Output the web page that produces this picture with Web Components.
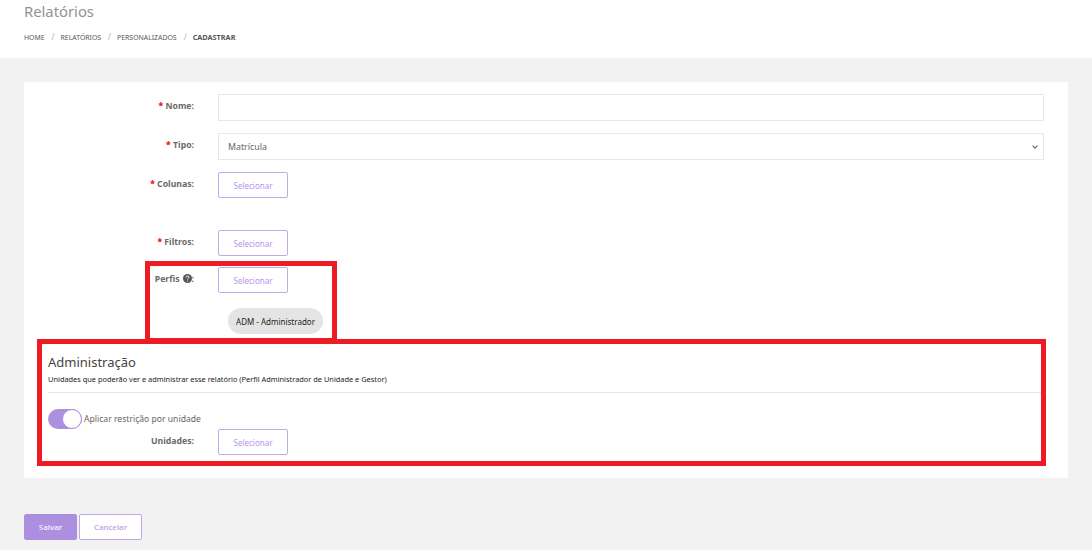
<!DOCTYPE html>
<html lang="pt-BR">
<head>
<meta charset="utf-8">
<title>Relatórios</title>
<style>
  html, body { margin: 0; height: 550px; overflow: hidden; }
  body { background: #f2f2f2; font-family: "Noto Sans", "Open Sans", "Liberation Sans", sans-serif; color: #555; position: relative; }
</style>
</head>
<body>
<page-header titulo="Relatórios">
  <bread-item>HOME</bread-item>
  <bread-item>RELATÓRIOS</bread-item>
  <bread-item>PERSONALIZADOS</bread-item>
  <bread-item atual>CADASTRAR</bread-item>
</page-header>

<form-card>
  <form-row label="Nome:" obrigatorio h="27"><text-field></text-field></form-row>
  <form-row label="Tipo:" obrigatorio h="27" style="margin-top:12px"><select-field valor="Matrícula"></select-field></form-row>
  <form-row label="Colunas:" obrigatorio style="margin-top:12px"><pick-button></pick-button></form-row>
  <form-row label="Filtros:" obrigatorio style="margin-top:32px"><pick-button></pick-button></form-row>
  <form-row label="Perfis" ajuda style="margin-top:11px"><pick-button></pick-button></form-row>
  <form-row style="margin-top:15px"><tag-chip>ADM - Administrador</tag-chip></form-row>
  <admin-section titulo="Administração" sub="Unidades que poderão ver e administrar esse relatório (Perfil Administrador de Unidade e Gestor)">
    <toggle-switch>Aplicar restrição por unidade</toggle-switch>
    <form-row label="Unidades:"><pick-button></pick-button></form-row>
  </admin-section>
</form-card>

<form-actions></form-actions>

<red-mark x="145" y="261" w="192" h="82"></red-mark>
<red-mark x="37" y="339" w="1009" h="127"></red-mark>

<script>
class PageHeader extends HTMLElement {
  connectedCallback() {
    this.attachShadow({ mode: "open" }).innerHTML = `
    <style>
      :host { display: block; height: 58px; background: #fff; padding-left: 24px; box-sizing: border-box; }
      h1 { margin: 0; padding-top: 1px; font-size: 14.8px; line-height: 20px; font-weight: 400; color: #929292; }
      nav { display: flex; margin-top: 11px; }
    </style>
    <h1>${this.getAttribute("titulo")}</h1>
    <nav><slot></slot></nav>`;
  }
}
class BreadItem extends HTMLElement {
  connectedCallback() {
    const atual = this.hasAttribute("atual");
    this.attachShadow({ mode: "open" }).innerHTML = `
    <style>
      :host { display: block; font-size: ${atual ? 7.3 : 6.9}px; line-height: 10px; color: #555; font-weight: ${atual ? 700 : 400}; }
      i { font-style: normal; color: #b5b5b5; font-weight: 400; font-size: 8px; margin: 0 6px 0 7px; }
    </style>
    <slot></slot>${atual ? "" : "<i>/</i>"}`;
  }
}
class FormCard extends HTMLElement {
  connectedCallback() {
    this.attachShadow({ mode: "open" }).innerHTML = `
    <style>
      :host { display: block; width: 1044px; height: 396px; box-sizing: border-box; margin: 24px 0 0 24px; padding: 12px 24px 0 0; background: #fff; }
    </style>
    <slot></slot>`;
  }
}
class FormRow extends HTMLElement {
  connectedCallback() {
    const label = this.getAttribute("label") || "";
    const req = this.hasAttribute("obrigatorio") ? `<b>*</b> ` : "";
    const ajuda = this.hasAttribute("ajuda")
      ? `<svg width="9" height="9" viewBox="0 0 9 9"><circle cx="4.5" cy="4.5" r="4.5" fill="#555"/><path d="M3 3.5c0-2 3-2 3-.3 0 1.100-1.500 1-1.500 2.200" fill="none" stroke="#fff" stroke-width="1"/><circle cx="4.500" cy="7" r=".6" fill="#fff"/></svg>:` : "";
    this.attachShadow({ mode: "open" }).innerHTML = `
    <style>
      :host { display: grid; grid-template-columns: 170px 1fr; column-gap: 24px; }
      .lab { text-align: right; font-size: 8.7px; line-height: 13px; font-weight: 700; color: #6a6a6a; padding-top: 6px; white-space: nowrap; }
      .lab b { color: #e81c1c; }
      svg { vertical-align: -1px; margin-left: 3px; }
    </style>
    <div class="lab">${req}${label}${ajuda}</div>
    <div><slot></slot></div>`;
  }
}
class TextField extends HTMLElement {
  connectedCallback() {
    this.attachShadow({ mode: "open" }).innerHTML = `
    <style>
      :host { display: block; height: 27px; box-sizing: border-box; border: 1px solid #e8e8e8; background: #fff; }
    </style>`;
  }
}
class SelectField extends HTMLElement {
  connectedCallback() {
    this.attachShadow({ mode: "open" }).innerHTML = `
    <style>
      :host { display: flex; align-items: center; justify-content: space-between; height: 27px; box-sizing: border-box; border: 1px solid #e8e8e8; padding: 0 5px 0 9px; font-size: 8.8px; color: #666; }
      svg { display: block; }
    </style>
    <span>${this.getAttribute("valor")}</span>
    <svg width="6" height="4" viewBox="0 0 6 4"><path d="M.6.7 3 3.100 5.400.7" fill="none" stroke="#666" stroke-width="1.100"/></svg>`;
  }
}
class PickButton extends HTMLElement {
  connectedCallback() {
    this.attachShadow({ mode: "open" }).innerHTML = `
    <style>
      :host { display: flex; align-items: center; justify-content: center; width: 70px; height: 26px; box-sizing: border-box; border: 1px solid #c3a8e8; border-radius: 2px; background: #fff; color: #b796e6; font-size: 8px; }
    </style>
    Selecionar`;
  }
}
class TagChip extends HTMLElement {
  connectedCallback() {
    this.attachShadow({ mode: "open" }).innerHTML = `
    <style>
      :host { display: inline-flex; align-items: center; justify-content: center; width: 95px; height: 26px; margin-left: 10px; border-radius: 13px; background: #e4e4e4; color: #222; font-size: 8px; vertical-align: top; }
    </style>
    <slot></slot>`;
  }
}
class AdminSection extends HTMLElement {
  connectedCallback() {
    this.attachShadow({ mode: "open" }).innerHTML = `
    <style>
      :host { display: block; margin-top: 19px; padding-left: 24px; }
      h2 { margin: 0; font-size: 13px; line-height: 18px; font-weight: 400; color: #444; }
      p { margin: 1.500px 0 0; font-size: 7.4px; line-height: 12px; color: #222; }
      hr { border: 0; border-top: 1px solid #e6e6e6; margin: 7.500px 0 16px; }
      .body { margin-left: -24px; }
    </style>
    <h2>${this.getAttribute("titulo")}</h2>
    <p>${this.getAttribute("sub")}</p>
    <hr>
    <div class="body"><slot></slot></div>`;
  }
}
class ToggleSwitch extends HTMLElement {
  connectedCallback() {
    this.attachShadow({ mode: "open" }).innerHTML = `
    <style>
      :host { display: flex; align-items: center; height: 20px; margin-left: 24px; font-size: 8.6px; color: #666; }
      .track { width: 34px; height: 20px; border-radius: 10px; background: #ad8fdf; position: relative; margin-right: 2px; flex: none; }
      .knob { position: absolute; right: 0; top: 0; width: 20px; height: 20px; box-sizing: border-box; border-radius: 50%; background: #fff; border: 1.500px solid #ad8fdf; }
    </style>
    <div class="track"><div class="knob"></div></div><slot></slot>`;
  }
}
class FormActions extends HTMLElement {
  connectedCallback() {
    this.attachShadow({ mode: "open" }).innerHTML = `
    <style>
      :host { display: flex; gap: 2px; margin: 36px 0 0 24px; font-size: 7.8px; font-weight: 600; }
      div { display: flex; align-items: center; justify-content: center; height: 26px; box-sizing: border-box; border-radius: 2px; border: 1px solid #ad8fdf; }
      .s { width: 53px; background: #ad8fdf; color: #f3ecfc; }
      .c { width: 63px; background: #fff; color: #c3a8e8; border-color: #c3a8e8; }
    </style>
    <div class="s">Salvar</div><div class="c">Cancelar</div>`;
  }
}
class RedMark extends HTMLElement {
  connectedCallback() {
    const g = n => this.getAttribute(n);
    this.attachShadow({ mode: "open" }).innerHTML = `
    <style>
      :host { position: absolute; left: ${g("x")}px; top: ${g("y")}px; width: ${g("w")}px; height: ${g("h")}px; box-sizing: border-box; border: 5px solid #ed1c24; pointer-events: none; }
    </style>`;
  }
}
customElements.define("page-header", PageHeader);
customElements.define("bread-item", BreadItem);
customElements.define("form-card", FormCard);
customElements.define("form-row", FormRow);
customElements.define("text-field", TextField);
customElements.define("select-field", SelectField);
customElements.define("pick-button", PickButton);
customElements.define("tag-chip", TagChip);
customElements.define("admin-section", AdminSection);
customElements.define("toggle-switch", ToggleSwitch);
customElements.define("form-actions", FormActions);
customElements.define("red-mark", RedMark);
</script>
</body>
</html>
